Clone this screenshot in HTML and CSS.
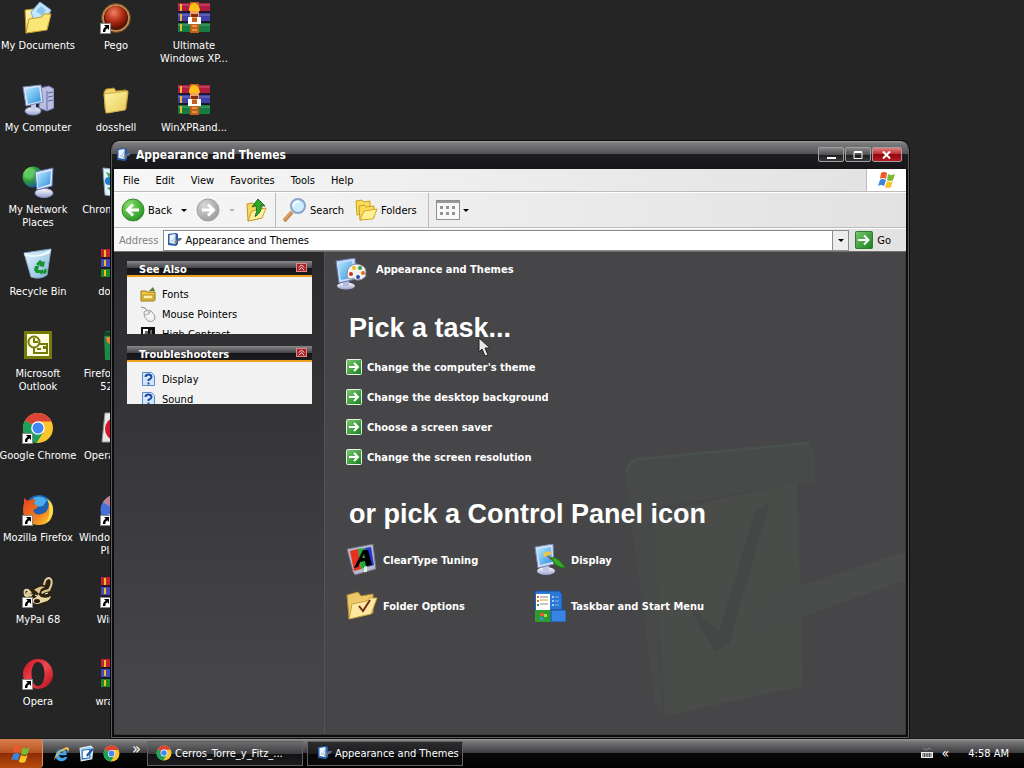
FILE: index.html
```html
<!DOCTYPE html>
<html lang="en">
<head>
    <meta charset="UTF-8">
    <meta name="viewport" content="width=device-width, initial-scale=1.0">
    <title>Appearance and Themes</title>
    <link rel="stylesheet" href="styles.css">
</head>
<body>
    <!-- Icon sprite -->
    <svg class="sprite" aria-hidden="true">
        <defs>
            <linearGradient id="gFolder" x1="0" y1="0" x2="1" y2="1"><stop offset="0" stop-color="#fff6a8"/><stop offset="1" stop-color="#e8c958"/></linearGradient>
            <linearGradient id="gScreen" x1="0" y1="0" x2="1" y2="1"><stop offset="0" stop-color="#b8ecff"/><stop offset="1" stop-color="#2d8fe0"/></linearGradient>
            <linearGradient id="gStand" x1="0" y1="0" x2="0" y2="1"><stop offset="0" stop-color="#ffffff"/><stop offset="1" stop-color="#9aa0d0"/></linearGradient>
            <linearGradient id="gGreen" x1="0" y1="0" x2="1" y2="1"><stop offset="0" stop-color="#7cc870"/><stop offset="1" stop-color="#14801c"/></linearGradient>
            <radialGradient id="gBack" cx="0.35" cy="0.3" r="0.8"><stop offset="0" stop-color="#8be070"/><stop offset="1" stop-color="#1f8f1c"/></radialGradient>
            <radialGradient id="gFwd" cx="0.35" cy="0.3" r="0.8"><stop offset="0" stop-color="#d8d8d8"/><stop offset="1" stop-color="#989898"/></radialGradient>
            <radialGradient id="gPego" cx="0.4" cy="0.3" r="0.7"><stop offset="0" stop-color="#f08060"/><stop offset="0.6" stop-color="#b02a14"/><stop offset="1" stop-color="#6a1006"/></radialGradient>
            <radialGradient id="gGlobe" cx="0.3" cy="0.3" r="0.8"><stop offset="0" stop-color="#a8f080"/><stop offset="0.5" stop-color="#2c9a3c"/><stop offset="1" stop-color="#1a4fb0"/></radialGradient>
            <linearGradient id="gBin" x1="0" y1="0" x2="1" y2="1"><stop offset="0" stop-color="#e8f8ff"/><stop offset="1" stop-color="#7fb4dc"/></linearGradient>
            <linearGradient id="gOpera" x1="0" y1="0" x2="1" y2="1"><stop offset="0" stop-color="#c80c20"/><stop offset="0.5" stop-color="#f04850"/><stop offset="1" stop-color="#b00818"/></linearGradient>
            <linearGradient id="gFox" x1="0" y1="0" x2="1" y2="1"><stop offset="0" stop-color="#e0401c"/><stop offset="0.6" stop-color="#f4801c"/><stop offset="1" stop-color="#ffe040"/></linearGradient>
        </defs>
        <symbol id="shortcut" viewBox="0 0 11 11">
            <rect x="0.5" y="0.5" width="10" height="10" fill="#fff" stroke="#888"/>
            <path d="M4 2h5v5L7.300 5.300Q5 6.500 5.300 9H3Q2.500 5.500 5.700 3.700z" fill="#000"/>
        </symbol>
        <symbol id="documents" viewBox="0 0 32 32">
            <path d="M3 8l8-1 2 3 15-1-1 10-5 9-18 3z" fill="url(#gFolder)" stroke="#b98d22"/>
            <path d="M9 10L18 0l11 8-7 12-10-1z" fill="#c4e6fa" stroke="#7fb0dc"/>
            <path d="M14 9l5-5 5 4-4 6z" fill="#8cc4ec"/>
            <path d="M4 31L7 17l13-2 2-3 7 0-4 16z" fill="#fbe678" stroke="#c49a2c"/>
        </symbol>
        <symbol id="computer" viewBox="0 0 32 32">
            <path d="M18 4l9-2 5 3v19l-7 3-8-3z" fill="#b8bee2" stroke="#7078ac"/>
            <path d="M25 7v19M26 9l5-1M26 13l5-1M26 17l5-1" stroke="#60689c" fill="none"/>
            <ellipse cx="11" cy="27" rx="8" ry="4" fill="url(#gStand)" stroke="#8a90c0"/>
            <path d="M9 19h5v7H9z" fill="#c8cce8"/>
            <path d="M1 3l18-2 2 17-17 4z" fill="#dfe6fa" stroke="#7486bc"/>
            <path d="M3 5l14-2 2 14-13 3z" fill="url(#gScreen)"/>
        </symbol>
        <symbol id="network" viewBox="0 0 32 32">
            <circle cx="11" cy="11" r="10.500" fill="url(#gGlobe)"/>
            <path d="M5 5q6-4 8 0t-5 6q-4 2-6-1z" fill="#5cc860"/>
            <ellipse cx="22" cy="27" rx="9" ry="4.500" fill="url(#gStand)" stroke="#8a90c0"/>
            <path d="M13 6l18-4-1 18-15 4z" fill="#dfe6fa" stroke="#6478b4"/>
            <path d="M15 8l14-3-1 13-12 4z" fill="url(#gScreen)"/>
        </symbol>
        <symbol id="bin" viewBox="0 0 32 32">
            <path d="M2 5l27-4-4 26q-7 5-16 2z" fill="url(#gBin)" stroke="#82a4c0"/>
            <path d="M2 5q12 6 27-4l-1 4q-12 6-25 3z" fill="#f4fcff" opacity="0.900"/>
            <path d="M14 16l4-4 3 2 2-1-1 6-5-1 1-2-2 2zM13 18h4l-1 4h3v3h-5l-2-3zM20 25v2l-3-3 4-3v2l3-3 1 4-2 2z" fill="#18942c"/>
        </symbol>
        <symbol id="outlook" viewBox="0 0 32 32">
            <rect x="2" y="1" width="28" height="28" fill="#767a08"/>
            <rect x="5" y="4" width="22" height="22" fill="#fffde4"/>
            <rect x="12" y="14" width="13" height="9" fill="#fffde4" stroke="#767a08" stroke-width="2"/>
            <circle cx="12" cy="12" r="5.500" fill="#fffde4" stroke="#767a08" stroke-width="2"/>
            <path d="M12 8v4h4M15 19h4" stroke="#767a08" stroke-width="2" fill="none"/>
            <path d="M21 16h3v3h-3z" fill="#767a08"/>
        </symbol>
        <symbol id="chrome" viewBox="0 0 32 32">
            <circle cx="16" cy="16" r="15" fill="#fbc62c"/>
            <path d="M16 16L3 8.500A15 15 0 0 1 29.500 9.500H16z" fill="#dc4437"/>
            <path d="M16 16L3 8.500A15 15 0 0 0 14.500 31L21.500 20z" fill="#1da05c"/>
            <circle cx="16" cy="16" r="6.800" fill="#fff"/>
            <circle cx="16" cy="16" r="5.500" fill="#4285f4"/>
        </symbol>
        <symbol id="firefox" viewBox="0 0 32 32">
            <circle cx="17" cy="15" r="14" fill="#2060b0"/>
            <path d="M11 4q8-4 14 2l-4 6-8 1z" fill="#48b0ec"/>
            <path d="M2 4l4 3q4-3 8-1l-3 4q2 1 5 1-1 4-5 5 2 6 8 4 6-1 7-6 2-6-1-9 6 4 6 12-1 14-15 14Q1 30 1 16q0-4 1-7z" fill="url(#gFox)"/>
            <path d="M25 5q7 4 6 13-1 7-7 11 4-7 3-13 1-6-2-11z" fill="#ffdc48"/>
        </symbol>
        <symbol id="mypal" viewBox="0 0 32 32">
            <path d="M2 18q-1-5 3-5l4 1q5-5 12-5 1-7 6-7 5 1 3 9l-2 4q3 4 1 9-4 5-9 5-8 2-12-4-6-1-6-7z" fill="#2e2110"/>
            <path d="M22 9q1-7 5-7 4 1 2 8l-2 4M3 19q-2-6 3-5l3 3q-4-2-4 1l1 3z" fill="none" stroke="#e6d2a0" stroke-width="2"/>
            <path d="M12 14q6-5 11-3l-4 2-2 5-3-3zM19 16q6-4 10-2-2 2-5 2l-4 2zM6 17l5 1-2 3-3-1z" fill="#dcc68c"/>
            <path d="M10 23q5-1 6-5l3 3q6 2 10-1-1 5-7 6l-6 2q-6 0-6-5z" fill="#e8d6a4"/>
            <ellipse cx="15" cy="25" rx="3" ry="2" fill="#20160a"/>
            <path d="M23 18l3-1M13 19l2 1" stroke="#fff"/>
        </symbol>
        <symbol id="opera" viewBox="0 0 32 32">
            <path fill-rule="evenodd" d="M16 1a15 15 0 0 1 0 30A15 15 0 0 1 16 1zm0 3c-4 0-6.500 5-6.500 12S12 28 16 28s6.500-5 6.500-12S20 4 16 4z" fill="url(#gOpera)"/>
        </symbol>
        <symbol id="pego" viewBox="0 0 32 32">
            <circle cx="16" cy="16" r="14.500" fill="#b98a52" stroke="#5e3b1a"/>
            <circle cx="16" cy="16" r="12" fill="#4a160a"/>
            <circle cx="16" cy="15" r="11" fill="url(#gPego)"/>
        </symbol>
        <symbol id="folder" viewBox="0 0 32 32">
            <path d="M4 8l2-3 8-1 2 3 10-1 2 3-2 16-18 4-3-4z" fill="#f0d468" stroke="#a88420"/>
            <path d="M4 10l24-3-3 19-19 3z" fill="url(#gFolder)" stroke="#d0b050"/>
        </symbol>
        <symbol id="winrar" viewBox="0 0 32 32">
            <path d="M0 1h32v9H0z" fill="#b01c40"/><path d="M0 11h32v9H0z" fill="#4040a8"/><path d="M0 21h32v9H0z" fill="#147c3c"/>
            <path d="M0 3h32M0 13h32M0 23h32" stroke="#fff" opacity="0.300"/>
            <path d="M0 10h32M0 20h32" stroke="#201828" stroke-width="2"/>
            <path d="M3 2v7M3 12v7M3 22v7" stroke="#e8b830" stroke-width="2"/>
            <path d="M12 0h9v31h-9z" fill="#c0601c"/>
            <path d="M11 9q0-8 5-8t6 8z" fill="#fcc018"/>
            <path d="M12 9h9v7h-9z" fill="#f0a060"/>
            <path d="M10 15h4v5h5v-5h4v7H10z" fill="#fff"/>
            <path d="M13 12h7v3h-7z" fill="#803010"/>
            <path d="M14 23h5v2h-5zM14 27h5v2h-5z" fill="#e49040"/>
        </symbol>
        <symbol id="rar" viewBox="0 0 32 32">
            <path d="M1 1h30v9H1z" fill="#c42030"/><path d="M1 11h30v8H1z" fill="#4448b8"/><path d="M1 20h30v9H1z" fill="#20882c"/>
            <path d="M1 10h30M1 20h30" stroke="#201828" stroke-width="2"/>
            <path d="M5 2v7M5 12v6M5 22v6" stroke="#f0c020" stroke-width="2"/><path d="M13 0h6v30h-6z" fill="#a06024"/>
        </symbol>
        <symbol id="setup" viewBox="0 0 32 32">
            <path d="M3 2l17 2v27L5 29z" fill="#e4f2fc" stroke="#90a8c0"/>
            <circle cx="9" cy="15" r="4" fill="#2080d0"/><path d="M6 6l5 2-2 4zM7 22l6-2-1 6z" fill="#38a850"/>
        </symbol>
        <symbol id="parrot" viewBox="0 0 32 32">
            <path d="M4 2q12-3 20 4l2 24H5z" fill="#1c8a48"/><path d="M6 7h14l-4 12-9-7z" fill="#f08030"/><path d="M4 2h12v4H4z" fill="#104820"/>
        </symbol>
        <symbol id="operabox" viewBox="0 0 32 32">
            <path d="M5 1h24l-2 29H2z" fill="#e8e8e8" stroke="#999"/><ellipse cx="15" cy="17" rx="10" ry="11" fill="#d01828"/><ellipse cx="16" cy="17" rx="4" ry="8" fill="#fff"/>
        </symbol>
        <symbol id="player" viewBox="0 0 32 32">
            <circle cx="16" cy="16" r="15" fill="#d8dcf0"/><path d="M16 16L3 8a15 15 0 0 1 13-7z" fill="#c08090"/><path d="M16 16L3 24A15 15 0 0 1 3 8z" fill="#4870d8"/><path d="M16 16V1a15 15 0 0 1 0 30z" fill="#e87030"/>
        </symbol>
        <symbol id="themes" viewBox="0 0 16 16">
            <path d="M2 2l8-1 2 1v10l-2 2-8-1z" fill="#2c5ca8"/>
            <path d="M3.500 3l6-1v10l-6-1z" fill="#eaf6ff"/>
            <path d="M5 8l1.500 2L9 5" stroke="#9abcdc" fill="none"/>
            <path d="M8 10l5-4 3 0-1 2-6 3z" fill="#5c6c88"/><path d="M8 11l2-2 1 1z" fill="#c8a860"/>
        </symbol>
        <symbol id="flag" viewBox="0 0 20 20">
            <path d="M4 3q3-2 6 0L9 9Q6 7 3 9z" fill="#ec5a2c"/>
            <path d="M11 4q3 2 7 0l-2 6q-3 2-6 0z" fill="#78b832"/>
            <path d="M3 10q3-2 6 0l-2 6q-3-2-6 0z" fill="#3c84dc"/>
            <path d="M10 11q3 2 6 0l-2 6q-3 2-6 0z" fill="#f8c428"/>
        </symbol>
        <symbol id="back" viewBox="0 0 24 24">
            <circle cx="12" cy="12" r="11" fill="url(#gBack)" stroke="#3c8c34"/>
            <path d="M18 12H7M12 6.500L6.500 12l5.500 5.500" fill="none" stroke="#fff" stroke-width="3"/>
        </symbol>
        <symbol id="forward" viewBox="0 0 24 24">
            <circle cx="12" cy="12" r="11" fill="url(#gFwd)" stroke="#a0a0a0"/>
            <path d="M6 12h11M12 6.500l5.500 5.500-5.500 5.500" fill="none" stroke="#fff" stroke-width="3"/>
        </symbol>
        <symbol id="up" viewBox="0 0 24 24">
            <path d="M3 6l6-1 2 3 7-1v13L4 23z" fill="#f4d860" stroke="#c0982c"/>
            <path d="M4 23l4-10 14-3-4 10z" fill="#fff0a0" stroke="#c8a038"/>
            <path d="M8 9l6-8 7 7-4-.500q1 7-6 11 3-5 1-11z" fill="#30a830" stroke="#187018"/>
        </symbol>
        <symbol id="search" viewBox="0 0 24 24">
            <path d="M1 23l8-9" stroke="#c88848" stroke-width="4"/><path d="M1 22l8-9" stroke="#f0c090"/>
            <circle cx="15" cy="8" r="7" fill="#cdeeff" stroke="#8ba4c8" stroke-width="2"/>
            <path d="M10 8q1-5 6-4" stroke="#fff" stroke-width="2" fill="none"/>
        </symbol>
        <symbol id="folders" viewBox="0 0 24 24">
            <path d="M2 3l6-1 2 2 6-1v11L3 17z" fill="#f8dc58" stroke="#c8a024"/>
            <path d="M5 8l5-1 2 2 8-1v12L6 22z" fill="#f8dc58" stroke="#c8a024"/>
            <path d="M6 22l4-9 13-2-4 10z" fill="#fff090" stroke="#d0a830"/>
        </symbol>
        <symbol id="views" viewBox="0 0 24 20">
            <rect x="0.500" y="0.500" width="23" height="19" fill="#f8f8f8" stroke="#909090"/>
            <path d="M1 1h22v2H1z" fill="#989898"/>
            <path d="M4 6h3v3H4zM10 6h3v3h-3zM16 6h3v3h-3zM4 12h3v3H4zM10 12h3v3h-3zM16 12h3v3h-3z" fill="#949494"/>
        </symbol>
        <symbol id="go" viewBox="0 0 18 18">
            <rect x="0.500" y="0.500" width="17" height="17" rx="1" fill="url(#gGreen)" stroke="#2c7c2c"/>
            <path d="M3 9h10M9 4.500L13.500 9 9 13.500" fill="none" stroke="#fff" stroke-width="2"/>
        </symbol>
        <symbol id="task" viewBox="0 0 16 16">
            <rect x="0.500" y="0.500" width="15" height="15" rx="1" fill="url(#gGreen)" stroke="#e4f4e0"/>
            <path d="M3 8h8M8 4l4 4-4 4" fill="none" stroke="#fff" stroke-width="2"/>
        </symbol>
        <symbol id="fonts" viewBox="0 0 16 16">
            <path d="M1 5h5l1 1h8v8l-1 1H1z" fill="#f0c838" stroke="#94741c"/>
            <path d="M3 9h10v4H3z" fill="#fff0a0" stroke="#b08c24"/><path d="M9 5l4-4 2 4z" fill="#5c7c34"/>
        </symbol>
        <symbol id="mouse" viewBox="0 0 16 16">
            <path d="M1 1l4 1 2 3" fill="none" stroke="#888"/>
            <path d="M4 6q3-3 7-1 5 4 4 8-3 4-7 2-5-4-4-9z" fill="#f4f4f4" stroke="#999"/>
            <path d="M5 9q4 0 6-4M8 4l1 4" fill="none" stroke="#aaa"/>
        </symbol>
        <symbol id="contrast" viewBox="0 0 16 16">
            <rect x="1" y="1" width="14" height="14" fill="#111"/><path d="M3 3h5v11H3z" fill="#fff"/><path d="M5 5h3v9H4zM10 4h2v8h-2z" fill="#666"/>
        </symbol>
        <symbol id="help" viewBox="0 0 16 16">
            <path d="M2.500 1.500h9l3 3v10h-12z" fill="#d4e6fc" stroke="#5c8cc8"/>
            <path d="M5.500 6q0-2.500 3-2.500t3 2.500q0 1.500-3 3v1M8.500 11.500v2" fill="none" stroke="#1c4ca0" stroke-width="2"/>
        </symbol>
        <symbol id="appearance" viewBox="0 0 32 32">
            <ellipse cx="11" cy="28" rx="9" ry="3.500" fill="url(#gStand)"/>
            <path d="M8 21h6v7H8z" fill="#b8bcdc"/>
            <path d="M1 3l19-3 1 21-17 4z" fill="#cadcf6" stroke="#6478b0"/>
            <path d="M3 5l14-2 2 16-13 3z" fill="url(#gScreen)"/>
            <path d="M12 16q0-9 9-10 10 1 10 8-1 2 0 4-4 5-10 4-2-3-5-1-4 0-4-5z" fill="#f4f2ec" stroke="#8c8c98"/>
            <circle cx="16" cy="16" r="2" fill="#c83028"/><circle cx="19" cy="10" r="2" fill="#e8c020"/><circle cx="25" cy="10" r="2" fill="#38a040"/><circle cx="28" cy="15" r="2" fill="#e07020"/><circle cx="23" cy="19" r="2" fill="#3048c0"/>
        </symbol>
        <symbol id="cleartype" viewBox="0 0 32 32">
            <path d="M1 5l26-5 3 25-21 6-2-3z" fill="#b8b8c8" stroke="#6c6c80"/>
            <path d="M4 7l8-2 3 20-7 2z" fill="#e83020"/><path d="M12 5l7-1 2 19-6 2z" fill="#28a838"/><path d="M19 4l6-1 3 18-7 2z" fill="#2838d0"/>
            <path d="M8 24l9-18h5l4 15-6 1-1-5-5 1-2 5zM16 14h3l-1-4z" fill="#000" fill-rule="evenodd"/>
            <path d="M18 23l3-1v6h-3z" fill="#d8f4e0"/>
        </symbol>
        <symbol id="display" viewBox="0 0 32 32">
            <ellipse cx="12" cy="27" rx="9" ry="4" fill="url(#gStand)"/>
            <path d="M9 20h6v7H9z" fill="#c0c4e0"/>
            <path d="M1 3l18-3 1 20-16 4z" fill="#d4e0f6" stroke="#7484b4"/>
            <path d="M3 5l14-2 1 15-12 3z" fill="url(#gScreen)"/>
            <path d="M9 9l7-2 2 3-8 3z" fill="#ecc848"/>
            <path d="M17 14q4-2 8 2l7 8q-8 0-12-5z" fill="#38a828" stroke="#1c6c18"/><path d="M12 11l6 3-1 2z" fill="#805020"/>
        </symbol>
        <symbol id="folderopt" viewBox="0 0 32 32">
            <path d="M1 5l11-3 3 4 12-2v19L3 29z" fill="#ecc868" stroke="#b48c34"/>
            <path d="M3 29L6 14l15-3 2-3 8 0-6 16z" fill="#ffe9a0" stroke="#c8a040"/>
            <path d="M13 16l4 5 7-11" stroke="#702818" stroke-width="2" fill="none"/>
        </symbol>
        <symbol id="taskbaricon" viewBox="0 0 32 32">
            <path d="M1 1h24l3 3v16H1z" fill="#2c78d4" stroke="#1850a0"/>
            <path d="M2 4h14v16H2z" fill="#fff"/>
            <path d="M6 7h8M6 14h8" stroke="#888"/><path d="M6 10h8" stroke="#e0a030"/><path d="M3 6h2v2H3zM3 10h2v2H3z" fill="#e07028"/><path d="M3 14h2v2H3z" fill="#389838"/>
            <path d="M18 6h2v2h-2zM18 10h2v2h-2zM18 14h2v2h-2z" fill="#9cd0fc"/><path d="M21 7h4M21 11h4M21 15h4" stroke="#78b4f4"/>
            <path d="M1 20h16v12H1z" fill="#2c9c30"/><path d="M17 20h15v12H17z" fill="#3884e4" stroke="#1850a0"/>
            <path d="M6 23h4v3H6z" fill="#e85c30"/><path d="M10 24h3v3h-3z" fill="#a0e040"/><path d="M6 27h3v3H6z" fill="#4488f0"/>
        </symbol>
        <symbol id="ie" viewBox="0 0 20 20">
            <path d="M16 12H7q1 4 5 3l2-1h3q-2 5-8 5-6-1-6-7 1-7 7-7 7 0 6 7zm-4-3q0-2-2-2-3 0-3 2z" fill="#44a4ec" fill-rule="evenodd"/>
            <path d="M2 18q-2-3 5-10 8-7 11-5 2 2-1 6 1-4-2-4Q8 7 3 15q-1 2-1 3z" fill="#f4c848"/>
        </symbol>
        <symbol id="showdesk" viewBox="0 0 16 16">
            <path d="M2 3l10-2 2 2-1 10-10 2z" fill="#a8d4f4" stroke="#e4f4ff"/><path d="M4 5l7-1v8l-7 1z" fill="#fff" stroke="#2c70b8"/><path d="M7 10l6-7 2 1-6 7z" fill="#2458a0"/><path d="M6 12l1-3 2 2z" fill="#fff"/>
        </symbol>
        <symbol id="keyboard" viewBox="0 0 12 12">
            <path d="M2 1l3 2 3-2 2 2" fill="none" stroke="#888"/><path d="M0 5h12v6H0z" fill="#eee"/><path d="M1 7h10M1 9h10M3.500 6v4M6 6v4M8.500 6v4" stroke="#555"/>
        </symbol>
    </svg>

    <main class="desktop">
        <nav class="desktop-icons" aria-label="Desktop">
            <a href="#" class="shortcut"><svg><use href="#documents"/></svg><span>My Documents</span></a>
            <a href="#" class="shortcut"><svg><use href="#computer"/></svg><span>My Computer</span></a>
            <a href="#" class="shortcut"><svg><use href="#network"/></svg><span>My Network Places</span></a>
            <a href="#" class="shortcut"><svg><use href="#bin"/></svg><span>Recycle Bin</span></a>
            <a href="#" class="shortcut"><svg><use href="#outlook"/></svg><span>Microsoft Outlook</span></a>
            <a href="#" class="shortcut"><svg><use href="#chrome"/><use href="#shortcut" y="21" width="11" height="11"/></svg><span>Google Chrome</span></a>
            <a href="#" class="shortcut"><svg><use href="#firefox"/><use href="#shortcut" y="21" width="11" height="11"/></svg><span>Mozilla Firefox</span></a>
            <a href="#" class="shortcut"><svg><use href="#mypal"/><use href="#shortcut" y="21" width="11" height="11"/></svg><span>MyPal 68</span></a>
            <a href="#" class="shortcut"><svg><use href="#opera"/><use href="#shortcut" y="21" width="11" height="11"/></svg><span>Opera</span></a>

            <a href="#" class="shortcut"><svg><use href="#pego"/><use href="#shortcut" y="21" width="11" height="11"/></svg><span>Pego</span></a>
            <a href="#" class="shortcut"><svg><use href="#folder"/></svg><span>dosshell</span></a>
            <a href="#" class="shortcut"><svg><use href="#setup"/></svg><span>ChromeSetup</span></a>
            <a href="#" class="shortcut"><svg><use href="#rar"/></svg><span>dosbox</span></a>
            <a href="#" class="shortcut"><svg><use href="#parrot"/></svg><span>Firefox Setup 52.9.0</span></a>
            <a href="#" class="shortcut"><svg><use href="#operabox"/></svg><span>Opera_Setup</span></a>
            <a href="#" class="shortcut"><svg><use href="#player"/><use href="#shortcut" y="21" width="11" height="11"/></svg><span>WindowsMedia Player</span></a>
            <a href="#" class="shortcut"><svg><use href="#rar"/><use href="#shortcut" y="21" width="11" height="11"/></svg><span>WinRAR</span></a>
            <a href="#" class="shortcut"><svg><use href="#rar"/></svg><span>wrar580</span></a>

            <a href="#" class="shortcut"><svg><use href="#winrar"/></svg><span>Ultimate Windows XP...</span></a>
            <a href="#" class="shortcut"><svg><use href="#winrar"/></svg><span>WinXPRand...</span></a>
        </nav>

        <section class="window">
            <header class="titlebar">
                <svg class="icon16"><use href="#themes"/></svg>
                <h1>Appearance and Themes</h1>
                <div class="window-buttons">
                    <button type="button" aria-label="Minimize"><svg viewBox="0 0 24 14"><path d="M8 9h9v2H8z" fill="#fff"/></svg></button>
                    <button type="button" aria-label="Maximize"><svg viewBox="0 0 24 14"><path d="M8 4.500h8v6H8zM8 3.500h8" fill="none" stroke="#fff"/></svg></button>
                    <button type="button" class="close" aria-label="Close"><svg viewBox="0 0 24 14"><path d="M8 3.500l7 7M15 3.500l-7 7" fill="none" stroke="#fff" stroke-width="2"/></svg></button>
                </div>
            </header>

            <div class="menubar">
                <button type="button">File</button>
                <button type="button">Edit</button>
                <button type="button">View</button>
                <button type="button">Favorites</button>
                <button type="button">Tools</button>
                <button type="button">Help</button>
                <div class="throbber"><svg><use href="#flag"/></svg></div>
            </div>

            <div class="toolbar">
                <div class="group">
                    <button type="button"><svg class="icon24"><use href="#back"/></svg>Back</button>
                    <button type="button" class="arrow" aria-label="Back history"></button>
                    <button type="button" aria-label="Forward" disabled><svg class="icon24"><use href="#forward"/></svg></button>
                    <button type="button" class="arrow" aria-label="Forward history" disabled></button>
                    <button type="button" aria-label="Up"><svg class="icon24"><use href="#up"/></svg></button>
                </div>
                <div class="group wide">
                    <button type="button"><svg class="icon24"><use href="#search"/></svg>Search</button>
                    <button type="button"><svg class="icon24"><use href="#folders"/></svg>Folders</button>
                </div>
                <div class="group">
                    <button type="button" class="views" aria-label="Views"><svg><use href="#views"/></svg></button>
                    <button type="button" class="arrow" aria-label="View options"></button>
                </div>
            </div>

            <form class="addressbar">
                <label for="address">Address</label>
                <div class="combo">
                    <svg class="icon16"><use href="#themes"/></svg>
                    <input type="text" id="address" value="Appearance and Themes">
                    <button type="button" class="arrow" aria-label="Show addresses"></button>
                </div>
                <button type="button" class="go"><svg><use href="#go"/></svg>Go</button>
            </form>

            <div class="content">
                <aside class="sidebar">
                    <section class="panel">
                        <h2>See Also <button type="button" aria-label="Collapse See Also"><svg viewBox="0 0 10 8"><path d="M2 4l3-3 3 3M2 7l3-3 3 3" fill="none" stroke="#fff"/></svg></button></h2>
                        <ul class="see-also">
                            <li><a href="#"><svg class="icon16"><use href="#fonts"/></svg>Fonts</a></li>
                            <li><a href="#"><svg class="icon16"><use href="#mouse"/></svg>Mouse Pointers</a></li>
                            <li><a href="#"><svg class="icon16"><use href="#contrast"/></svg>High Contrast</a></li>
                        </ul>
                    </section>
                    <section class="panel">
                        <h2>Troubleshooters <button type="button" aria-label="Collapse Troubleshooters"><svg viewBox="0 0 10 8"><path d="M2 4l3-3 3 3M2 7l3-3 3 3" fill="none" stroke="#fff"/></svg></button></h2>
                        <ul class="troubleshooters">
                            <li><a href="#"><svg class="icon16"><use href="#help"/></svg>Display</a></li>
                            <li><a href="#"><svg class="icon16"><use href="#help"/></svg>Sound</a></li>
                        </ul>
                    </section>
                </aside>

                <div class="tasks">
                    <svg class="watermark" viewBox="0 0 280 280" aria-hidden="true">
                        <path d="M0 32Q0 20 12 17L178 1q12 0 12 12v30L178 40 30 66l8 206-8-10z" fill="#474a48"/>
                        <path d="M2 30Q2 20 14 17L185 1" fill="none" stroke="#4a504b" stroke-width="3"/>
                        <path d="M28 72L172 40l6 204L40 274z" fill="#4a4c49"/>
                        <path d="M60 158l34 32 36-120 14-8-40 140-14 8z" fill="#444745"/>
                        <path d="M134 178l20-28 126-40v28l-110 40-34 8z" fill="#494c4a"/>
                    </svg>
                    <div class="category">
                        <svg class="icon32"><use href="#appearance"/></svg>
                        <strong>Appearance and Themes</strong>
                    </div>
                    <h2>Pick a task...</h2>
                    <ul class="task-list">
                        <li><a href="#"><svg class="icon16"><use href="#task"/></svg>Change the computer's theme</a></li>
                        <li><a href="#"><svg class="icon16"><use href="#task"/></svg>Change the desktop background</a></li>
                        <li><a href="#"><svg class="icon16"><use href="#task"/></svg>Choose a screen saver</a></li>
                        <li><a href="#"><svg class="icon16"><use href="#task"/></svg>Change the screen resolution</a></li>
                    </ul>
                    <h2>or pick a Control Panel icon</h2>
                    <div class="applets">
                        <a href="#"><svg class="icon32"><use href="#cleartype"/></svg>ClearType Tuning</a>
                        <a href="#"><svg class="icon32"><use href="#display"/></svg>Display</a>
                        <a href="#"><svg class="icon32"><use href="#folderopt"/></svg>Folder Options</a>
                        <a href="#"><svg class="icon32"><use href="#taskbaricon"/></svg>Taskbar and Start Menu</a>
                    </div>
                </div>
            </div>
        </section>

        <svg class="cursor" viewBox="0 0 14 20" aria-hidden="true"><path d="M1 1v14l3-3 3 7 3-1-3-7h5z" fill="#e8e8e8" stroke="#222"/></svg>
    </main>

    <footer class="taskbar">
        <button type="button" class="start" aria-label="Start"><svg><use href="#flag"/></svg></button>
        <div class="quick-launch">
            <a href="#" aria-label="Internet Explorer"><svg><use href="#ie"/></svg></a>
            <a href="#" aria-label="Show Desktop"><svg><use href="#showdesk"/></svg></a>
            <a href="#" aria-label="Google Chrome"><svg><use href="#chrome"/></svg></a>
            <button type="button">»</button>
        </div>
        <button type="button" class="task-button"><svg class="icon16"><use href="#chrome"/></svg>Cerros_Torre_y_Fitz_...</button>
        <button type="button" class="task-button active"><svg class="icon16"><use href="#themes"/></svg>Appearance and Themes</button>
        <div class="tray">
            <svg><use href="#keyboard"/></svg>
            <button type="button">«</button>
            <time>4:58 AM</time>
        </div>
    </footer>
</body>
</html>
```
FILE: styles.css
```css
* {
    box-sizing: border-box;
}
body {
    margin: 0;
    height: 100vh;
    display: flex;
    flex-direction: column;
    background-color: #252525;
    font-family: Tahoma, "DejaVu Sans Condensed", sans-serif;
    font-size: 11px;
    line-height: 13px;
    overflow: hidden;
}
.sprite {
    position: absolute;
    width: 0;
    height: 0;
}
a {
    color: inherit;
    text-decoration: none;
}
button {
    font: inherit;
    color: inherit;
    background: none;
    border: none;
    padding: 0;
}
ul {
    list-style: none;
    margin: 0;
    padding: 0;
}
svg {
    flex: none;
}
.icon16 {
    width: 16px;
    height: 16px;
}
.icon24 {
    width: 24px;
    height: 24px;
}
.icon32 {
    width: 32px;
    height: 32px;
}

/* Desktop */
.desktop {
    position: relative;
    flex: 1;
    min-height: 0;
}
.desktop-icons {
    display: grid;
    grid-auto-flow: column;
    grid-template-rows: repeat(9, 82px);
    grid-auto-columns: 78px;
    margin-left: -1px;
}
.shortcut {
    display: flex;
    flex-direction: column;
    align-items: center;
    gap: 5px;
    padding-top: 2px;
    color: #fff;
    text-align: center;
}
.shortcut svg {
    width: 32px;
    height: 32px;
}

/* Window */
.window {
    position: absolute;
    top: 141px;
    right: 115px;
    bottom: 0;
    left: 111px;
    display: flex;
    flex-direction: column;
    padding: 0 2px 2px;
    background-color: #0c0c0c;
    border: 1px solid #5c5c5e;
    border-top: none;
    border-radius: 8px 8px 0 0;
    outline: 1px solid #0c0c0c;
    overflow: hidden;
}
.titlebar {
    display: flex;
    align-items: center;
    gap: 5px;
    height: 28px;
    margin: 0 -2px;
    padding: 0 6px 0 3px;
    background: linear-gradient(#a0a0a0, #7c7c7e 2px, #525254 13px, #1e1e20 13px, #161618);
    color: #fff;
}
.titlebar h1 {
    flex: 1;
    margin: 0;
    font-family: "DejaVu Sans Condensed", sans-serif;
    font-size: 12px;
    line-height: 14px;
}
.window-buttons {
    display: flex;
    gap: 1px;
    margin-bottom: 1px;
}
.window-buttons button {
    width: 26px;
    height: 15px;
    border: 1px solid #a0a0a0;
    border-radius: 2px;
    background: linear-gradient(#868688, #505052 50%, #1c1c1e 50%, #38383a);
}
.window-buttons .close {
    width: 30px;
    background: linear-gradient(#e08080, #c03038 45%, #900810 50%, #b81820);
}
.window-buttons svg {
    display: block;
    width: 24px;
    height: 14px;
    margin: 0 auto;
}

.menubar,
.toolbar,
.addressbar {
    display: flex;
    background: linear-gradient(to right, #f7f7f7, #e2e2e2);
    color: #000;
}
.menubar {
    height: 23px;
    border-bottom: 1px solid #bcbcbc;
    padding-left: 9px;
    gap: 16px;
}
.throbber {
    display: grid;
    place-items: center;
    width: 40px;
    margin-left: auto;
    background-color: #fff;
    border-left: 1px solid #bcbcbc;
}
.throbber svg {
    width: 20px;
    height: 20px;
}
.toolbar {
    height: 36px;
    border-top: 1px solid #fff;
    border-bottom: 1px solid #bcbcbc;
}
.group {
    display: flex;
    align-items: center;
    gap: 6px;
    padding: 0 7px;
    border-left: 1px solid #bcbcbc;
}
.group:first-child {
    border-left: none;
}
.group.wide {
    gap: 10px;
    padding-right: 11px;
}
.group button {
    display: flex;
    align-items: center;
    gap: 3px;
}
.group .views svg {
    width: 24px;
    height: 20px;
}
.arrow::before {
    content: "";
    border: 3px solid transparent;
    border-top-color: #000;
    border-bottom: none;
}
.group .arrow {
    width: 12px;
    justify-content: center;
}
.group .views + .arrow {
    margin-left: -6px;
}
.arrow:disabled::before {
    border-top-color: #b8b8b8;
}
.addressbar {
    align-items: center;
    gap: 5px;
    height: 23px;
    padding: 0 15px 0 5px;
    border-top: 1px solid #fff;
}
.addressbar label {
    color: #808080;
}
.combo {
    flex: 1;
    display: flex;
    align-items: center;
    gap: 3px;
    height: 21px;
    padding-left: 2px;
    background-color: #fff;
    border: 1px solid #8c8c8c;
}
.combo input {
    flex: 1;
    min-width: 0;
    padding: 0;
    border: none;
    outline: none;
    background: none;
    font: inherit;
    color: #000;
}
.combo .arrow {
    display: grid;
    place-items: center;
    width: 16px;
    height: 19px;
    background-color: #ededed;
    border-left: 1px solid #8c8c8c;
}
.go {
    display: flex;
    align-items: center;
    gap: 4px;
    padding-left: 1px;
}
.go svg {
    width: 18px;
    height: 18px;
}

/* Content */
.content {
    flex: 1;
    min-height: 0;
    display: flex;
    border: 1px solid #3a3a3a;
    border-top-color: #707272;
    border-left: none;
}
.sidebar {
    width: 211px;
    padding: 9px 12px 9px 13px;
    display: flex;
    flex-direction: column;
    gap: 12px;
    background: linear-gradient(#2b2b2d, #464648 90%);
    border-right: 1px solid #555557;
}
.panel {
    background-color: #f2f2f2;
}
.panel h2 {
    display: flex;
    align-items: center;
    justify-content: space-between;
    margin: 0;
    height: 16px;
    padding: 0 5px 0 12px;
    background: linear-gradient(#88888a, #444446 7px, #151517 7px, #1c1c1e 14px, #f0a020 14px);
    color: #fff;
    font-size: 11px;
}
.panel h2 button {
    display: grid;
    width: 11px;
    height: 9px;
    margin-bottom: 3px;
    background-color: #a82028;
    border: 1px solid #e08888;
}
.panel ul {
    overflow: hidden;
    padding: 7px 13px 0;
}
.panel .see-also {
    height: 57px;
}
.panel .troubleshooters {
    height: 42px;
}
.panel a {
    display: flex;
    align-items: center;
    gap: 6px;
    height: 20px;
}

.tasks {
    position: relative;
    flex: 1;
    padding: 6px 10px;
    background-color: #464648;
    color: #fff;
    font-weight: bold;
    overflow: hidden;
}
.tasks > * {
    position: relative;
}
.tasks .watermark {
    position: absolute;
    right: 0;
    bottom: 12px;
    width: 280px;
    height: 280px;
}
.category {
    display: flex;
    gap: 9px;
    height: 32px;
}
.category strong {
    margin-top: 5px;
}
.tasks h2 {
    margin: 22px 0 0 14px;
    font-family: "Liberation Sans", sans-serif;
    font-size: 27px;
    line-height: 32px;
}
.task-list {
    padding: 8px 11px 0;
}
.task-list a {
    display: flex;
    align-items: center;
    gap: 5px;
    height: 30px;
}
.task-list + h2 {
    margin-top: 26px;
}
.applets {
    display: grid;
    grid-template-columns: 182px 182px;
    gap: 14px 6px;
    padding: 14px 11px 0;
}
.applets a {
    display: flex;
    align-items: center;
    gap: 5px;
}

.cursor {
    position: absolute;
    left: 478px;
    top: 337px;
    width: 14px;
    height: 20px;
}

/* Taskbar */
.taskbar {
    display: flex;
    align-items: center;
    height: 30px;
    background: linear-gradient(#1c1c1c 1px, #98989a 1px, #747476 4px, #3c3c3e 15px, #0a0a0a 15px, #000);
    color: #fff;
}
.start {
    display: grid;
    place-items: center;
    width: 43px;
    height: 29px;
    margin-top: 1px;
    border-right: 1px solid #e09060;
    border-radius: 0 4px 4px 0;
    background: linear-gradient(#d88050, #b85020 14px, #8c2c04 14px, #b84c10);
}
.start svg {
    width: 22px;
    height: 22px;
}
.quick-launch {
    display: flex;
    align-items: center;
    gap: 8px;
    width: 104px;
    padding-left: 10px;
}
.quick-launch svg {
    display: block;
    width: 17px;
    height: 17px;
}
.quick-launch button {
    margin: 0 0 10px 4px;
    font-size: 16px;
}
.task-button {
    display: flex;
    align-items: center;
    gap: 3px;
    width: 156px;
    height: 25px;
    margin-right: 4px;
    padding: 0 8px;
    border: 1px solid #606062;
    background: linear-gradient(#6c6c6e, #3c3c3e 12px, #121214 12px, #1c1c1e);
    white-space: nowrap;
}
.task-button.active {
    background: linear-gradient(#2c2c2e, #1c1c1e 12px, #080808 12px, #0c0c0c);
}
.tray {
    display: flex;
    align-items: center;
    gap: 9px;
    margin-left: auto;
    padding-right: 15px;
}
.tray svg {
    width: 12px;
    height: 12px;
}
.tray button {
    font-size: 14px;
}
.tray time {
    margin-left: 10px;
}
```
